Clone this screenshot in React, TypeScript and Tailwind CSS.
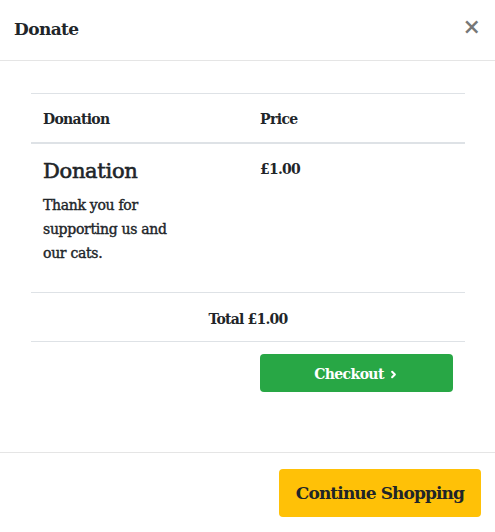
import React from 'react';
import { ChevronRight } from 'lucide-react';

const font = { fontFamily: '"DejaVu Serif", "Liberation Serif", serif' };

const App: React.FC = () => {
  return (
    <div className="w-[495px] h-[532px] bg-white text-[#212529] flex flex-col" style={font}>
      {/* Header */}
      <div className="h-[61px] flex items-center justify-between pl-[14px] pr-[14px] border-b border-[#e5e5e5]">
        <h4 className="text-[17px] font-semibold tracking-[-0.6px]">Donate</h4>
        <button className="text-[22px] font-bold text-[#777] leading-none -mt-[8px]">×</button>
      </div>

      {/* Body */}
      <div className="flex-1 pt-[32px] px-[31px] pr-[30px]">
        <table className="w-full border-collapse text-[14px]">
          <thead>
            <tr className="border-t border-[#dee2e6] border-b-2">
              <th className="w-1/2 text-left font-bold px-[12px] pt-[4px] h-[49px] align-middle tracking-[-0.7px]">Donation</th>
              <th className="w-1/2 text-left font-bold px-[12px] pt-[4px] align-middle tracking-[-0.6px]">Price</th>
            </tr>
          </thead>
          <tbody>
            <tr className="border-b border-[#dee2e6]">
              <td className="px-[12px] pt-[12px] pb-[27px] align-top">
                <div className="text-[21px] leading-[30px] tracking-[-0.3px] [-webkit-text-stroke:0.6px_#212529]">Donation</div>
                <p className="mt-[7px] text-[14px] leading-[24px] w-[140px] tracking-[-0.3px] [-webkit-text-stroke:0.4px_#212529]">
                  Thank you for supporting us and our cats.
                </p>
              </td>
              <td className="px-[12px] pt-[15px] align-top font-semibold tracking-[-0.8px]">£1.00</td>
            </tr>
            <tr className="border-b border-[#dee2e6]">
              <td colSpan={2} className="h-[49px] pt-[5px] text-center font-bold tracking-[-0.8px]">Total £1.00</td>
            </tr>
            <tr>
              <td></td>
              <td className="px-[12px] pt-[12px]">
                <button className="w-full h-[38px] pt-[3px] rounded-[4px] bg-[#28a745] text-white font-bold text-[14px] tracking-[-0.6px] flex items-center justify-center gap-[4px]">
                  Checkout
                  <ChevronRight size={11} strokeWidth={4.5} className="mt-[1px]" />
                </button>
              </td>
            </tr>
          </tbody>
        </table>
      </div>

      {/* Footer */}
      <div className="h-[80px] border-t border-[#e5e5e5] flex items-start justify-end pt-[16px] pr-[14px]">
        <button className="h-[48px] px-[17px] pt-[1px] rounded-[4px] bg-[#ffc107] text-[#212529] text-[17px] font-semibold tracking-[-0.9px]">
          Continue Shopping
        </button>
      </div>
    </div>
  );
};

export default App;
